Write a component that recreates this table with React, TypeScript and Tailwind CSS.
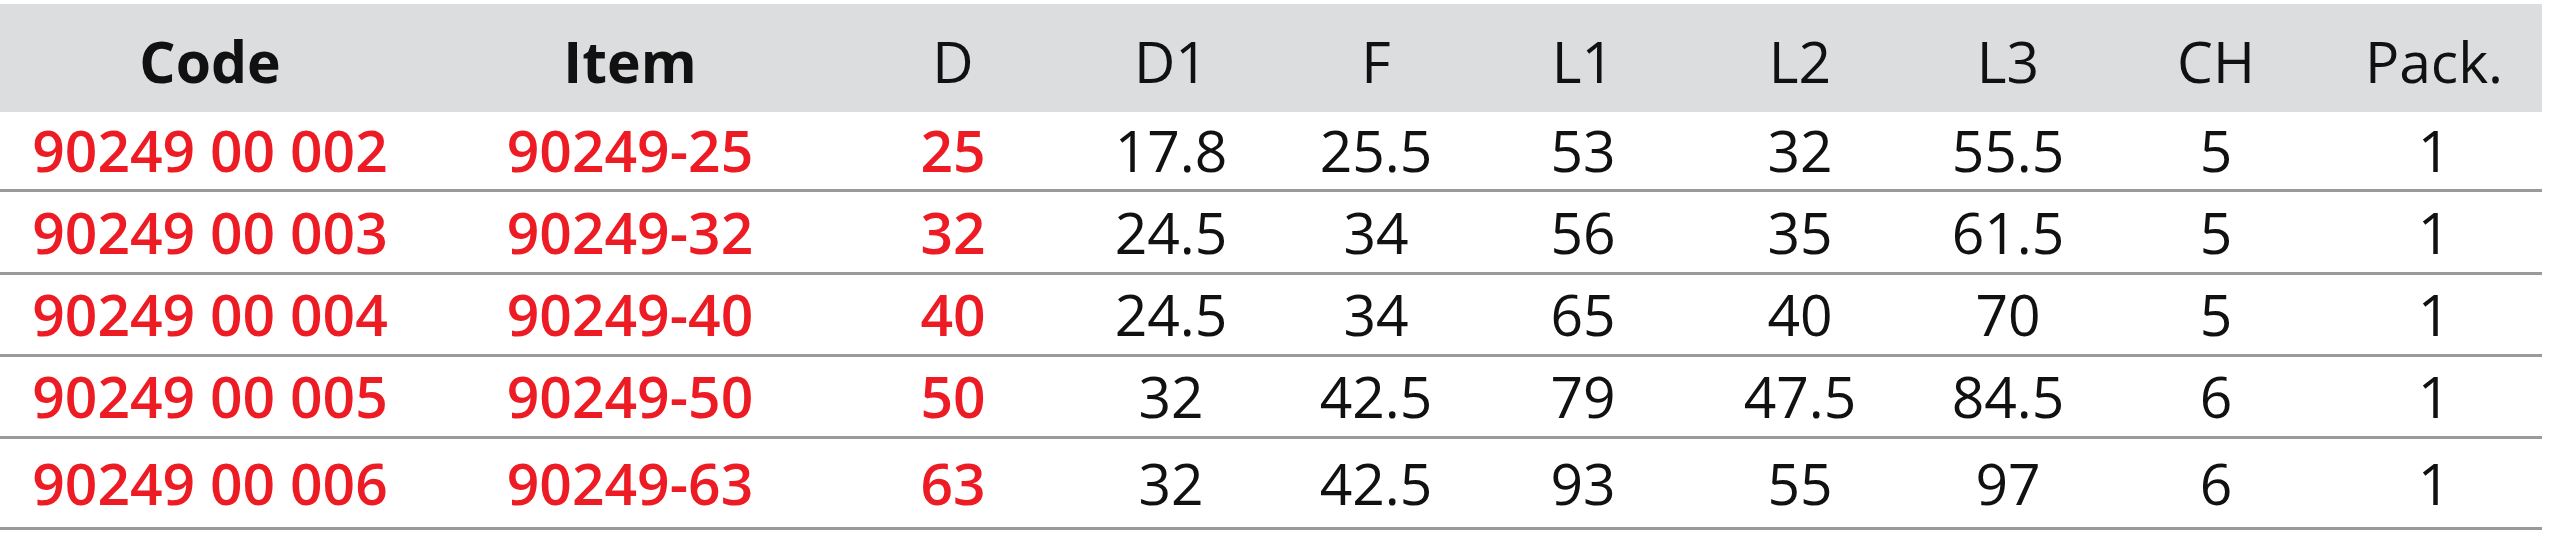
import React from "react";

const cols =
  "grid grid-cols-[420px_420px_226px_210px_200px_214px_220px_196px_220px_216px]";

const headers = ["Code", "Item", "D", "D1", "F", "L1", "L2", "L3", "CH", "Pack."];

const rows: { h: string; cells: string[] }[] = [
  { h: "h-[77px]", cells: ["90249 00 002", "90249-25", "25", "17.8", "25.5", "53", "32", "55.5", "5", "1"] },
  { h: "h-[80px]", cells: ["90249 00 003", "90249-32", "32", "24.5", "34", "56", "35", "61.5", "5", "1"] },
  { h: "h-[79px]", cells: ["90249 00 004", "90249-40", "40", "24.5", "34", "65", "40", "70", "5", "1"] },
  { h: "h-[79px]", cells: ["90249 00 005", "90249-50", "50", "32", "42.5", "79", "47.5", "84.5", "6", "1"] },
  { h: "h-[88px]", cells: ["90249 00 006", "90249-63", "63", "32", "42.5", "93", "55", "97", "6", "1"] },
];

export default function App() {
  return (
    <div className="w-[2560px] h-[536px] bg-white pt-[4px] font-['Open_Sans','Noto_Sans',sans-serif] text-[57px] leading-none">
      <div className="w-[2542px]">
        <div className={`${cols} h-[108px] bg-[#dcdddf] text-[#111]`}>
          {headers.map((t, i) => (
            <div
              key={t}
              className={`flex items-center justify-center pt-[6px] ${i < 2 ? "font-bold" : "font-normal"}`}
            >
              {t}
            </div>
          ))}
        </div>
        {rows.map((r, ri) => (
          <div key={ri} className={`${cols} ${r.h} box-content border-b-[3px] border-[#9a9a9c]`}>
            {r.cells.map((c, i) => (
              <div
                key={i}
                className={`flex items-center justify-center ${
                  i < 3 ? "text-[#ed1c24] font-semibold" : "text-[#111] font-normal"
                }`}
              >
                {c}
              </div>
            ))}
          </div>
        ))}
      </div>
    </div>
  );
}
